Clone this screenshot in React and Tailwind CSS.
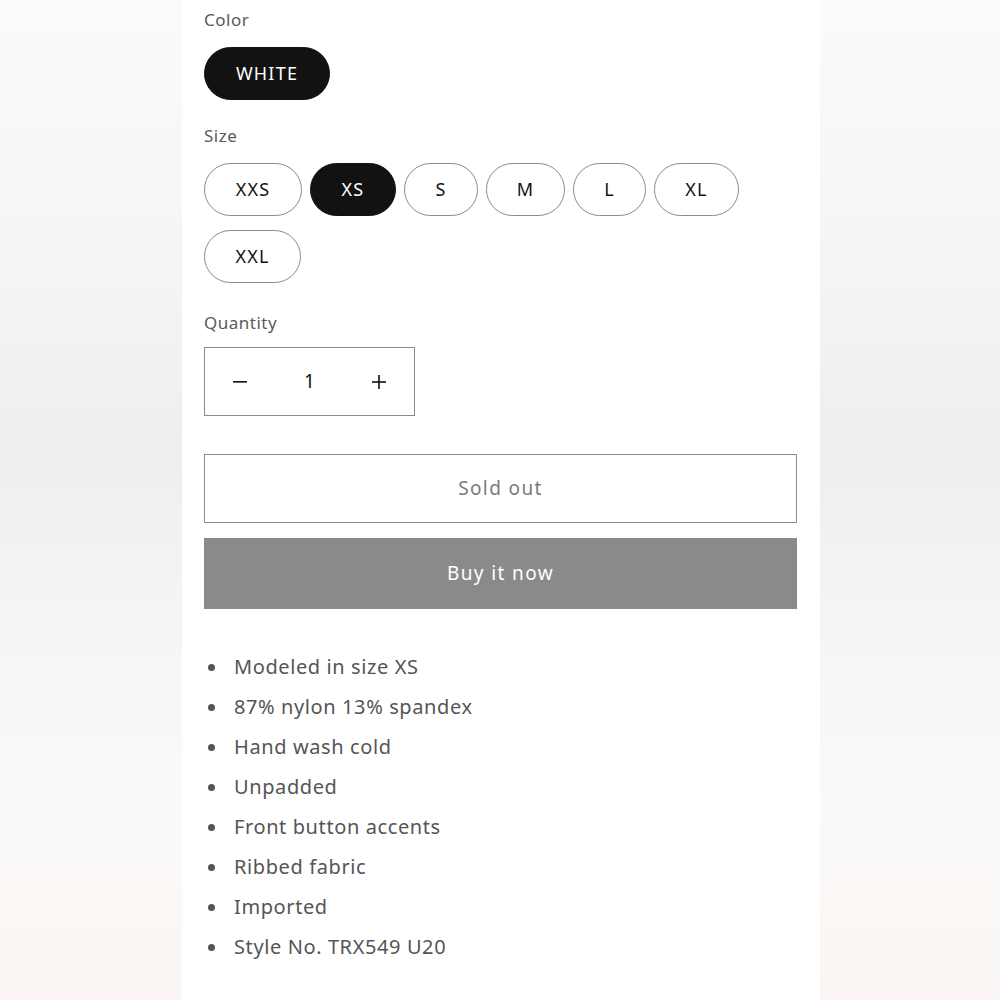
const sizes = [
  { label: "XXS", w: "w-[98px]" },
  { label: "XS", w: "w-[86px]", active: true },
  { label: "S", w: "w-[74px]" },
  { label: "M", w: "w-[79px]" },
  { label: "L", w: "w-[73px]" },
  { label: "XL", w: "w-[85px]" },
  { label: "XXL", w: "w-[97px]" },
];

const details = [
  "Modeled in size XS",
  "87% nylon 13% spandex",
  "Hand wash cold",
  "Unpadded",
  "Front button accents",
  "Ribbed fabric",
  "Imported",
  "Style No. TRX549 U20",
];

const Pill = ({ label, w, active }) => (
  <button
    className={
      active
        ? `${w} h-[53px] rounded-full bg-[#121212] border border-[#121212] text-white text-[18px] tracking-[1.2px]`
        : `${w} h-[53px] rounded-full bg-white border-[1.5px] border-[#8a8a8a] text-[#121212] text-[18px] tracking-[1.2px]`
    }
  >
    {label}
  </button>
);

export default function App() {
  return (
    <div
      className="min-h-[1000px] w-full flex justify-center bg-[linear-gradient(180deg,#fbfbfb_0%,#f5f5f5_25%,#eeeeee_45%,#f6f6f6_65%,#fbfaf9_80%,#faf5f2_100%)]"
      style={{ fontFamily: '"Noto Sans", sans-serif' }}
    >
      <div className="w-[638px] bg-white pl-[22px] pr-[23px] pt-[8px] pb-10 ml-[2px]">
        {/* Color */}
        <p className="text-[17px] text-[#5a5a5a] tracking-[0.5px] leading-[24px]">Color</p>
        <div className="mt-[15px]">
          <Pill label="WHITE" w="w-[126px]" active />
        </div>

        {/* Size */}
        <p className="mt-[24px] text-[17px] text-[#5a5a5a] tracking-[0.5px] leading-[24px]">Size</p>
        <div className="mt-[15px] flex flex-wrap gap-x-[8px] gap-y-[14px] w-[560px]">
          {sizes.map((s) => (
            <Pill key={s.label} {...s} />
          ))}
        </div>

        {/* Quantity */}
        <p className="mt-[28px] text-[17px] text-[#5a5a5a] tracking-[0.5px] leading-[24px]">Quantity</p>
        <div className="mt-[12px] w-[211px] h-[69px] border-[1.5px] border-[#8a8a8a] flex items-center text-[#121212]">
          <button className="w-[70px] h-full flex items-center justify-center">
            <svg width="14" height="2" viewBox="0 0 14 2">
              <rect width="14" height="1.6" fill="#121212" />
            </svg>
          </button>
          <span className="flex-1 text-center text-[19px]">1</span>
          <button className="w-[70px] h-full flex items-center justify-center">
            <svg width="14" height="14" viewBox="0 0 14 14">
              <rect x="0" y="6.2" width="14" height="1.6" fill="#121212" />
              <rect x="6.2" y="0" width="1.6" height="14" fill="#121212" />
            </svg>
          </button>
        </div>

        {/* Buttons */}
        <button className="mt-[38px] w-full h-[69px] border-[1.5px] border-[#8a8a8a] bg-white text-[#7a7a7a] text-[19px] tracking-[1.4px]">
          Sold out
        </button>
        <button className="mt-[15px] w-full h-[71px] bg-[#8a8a8a] text-white text-[19px] tracking-[1.4px]">
          Buy it now
        </button>

        {/* Product details */}
        <ul className="mt-[38px] flex flex-col">
          {details.map((d) => (
            <li key={d} className="h-[40px] flex items-center text-[20px] text-[#555555] tracking-[0.6px]">
              <span className="w-[30px] pl-[4px] flex items-center">
                <span className="w-[7px] h-[7px] rounded-full bg-[#555555]" />
              </span>
              {d}
            </li>
          ))}
        </ul>
      </div>
    </div>
  );
}
